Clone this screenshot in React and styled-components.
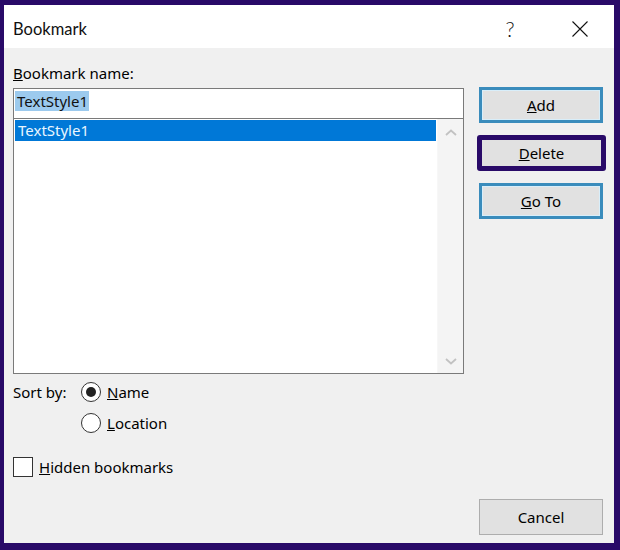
import React from "react";
import styled, { createGlobalStyle } from "styled-components";

const Global = createGlobalStyle`
  html, body { margin: 0; padding: 0; background: #290a68; }
  body { font-family: "Noto Sans", "Segoe UI", sans-serif; color: #000; }
  * { box-sizing: border-box; }
`;

const Frame = styled.div`
  width: 620px;
  height: 550px;
  border-style: solid;
  border-color: #290a68;
  border-width: 5px 6px 7px 4px;
  display: flex;
  flex-direction: column;
  background: #f0f0f0;
`;

const TitleBar = styled.div`
  height: 43px;
  background: #fff;
  display: flex;
  align-items: center;
  padding: 0 11px 0 9px;
`;

const Title = styled.div`
  font-family: Lato, "Noto Sans", sans-serif;
  font-size: 16.5px;
  flex: 1;
  padding-top: 4px;
  color: #111;
`;

const TitleBtn = styled.div`
  width: 46px;
  height: 43px;
  display: flex;
  align-items: center;
  justify-content: center;
  font-family: Lato, "Noto Sans", sans-serif;
  font-size: 21px;
  font-weight: 300;
  padding-top: 4px;
  color: #111;
  & + & { margin-left: 24px; }
`;

const Body = styled.div`
  flex: 1;
  display: flex;
  padding: 15px 11px 8px 9px;
  gap: 15px;
`;

const LeftCol = styled.div`
  width: 451px;
  display: flex;
  flex-direction: column;
`;

const RightCol = styled.div`
  width: 124px;
  display: flex;
  flex-direction: column;
  padding-top: 24px;
  gap: 12px;
`;

const Label = styled.div`
  font-size: 15px;
  line-height: 20px;
  margin-bottom: 5px;
`;

const Input = styled.div`
  height: 30px;
  background: #fff;
  border: 1px solid #7a7a7a;
  border-bottom: none;
  padding: 2px 1px;
  display: flex;
  align-items: flex-start;
`;

const Highlight = styled.span`
  background: #9ccaee;
  font-size: 15px;
  line-height: 20px;
  padding: 0 1px 0 2px;
  color: #111;
`;

const List = styled.div`
  height: 256px;
  background: #fff;
  border: 1px solid #7a7a7a;
  display: flex;
`;

const Items = styled.div`
  flex: 1;
  padding: 1px;
`;

const Row = styled.div`
  height: 21px;
  font-size: 15px;
  line-height: 21px;
  padding-left: 3px;
  background: ${(p) => (p.$selected ? "#0078d7" : "transparent")};
  color: ${(p) => (p.$selected ? "#e8f6ff" : "#000")};
`;

const Scroll = styled.div`
  width: 26px;
  background: #f4f4f4;
  border-left: 1px solid #f7f7f7;
  display: flex;
  flex-direction: column;
  justify-content: space-between;
  align-items: center;
  padding: 10px 0 8px;
`;

const SortRow = styled.div`
  display: flex;
  margin-top: 8px;
`;

const SortLabel = styled.div`
  width: 68px;
  font-size: 15px;
  line-height: 20px;
`;

const RadioGroup = styled.div`
  display: flex;
  flex-direction: column;
  gap: 11px;
`;

const Option = styled.label`
  display: flex;
  align-items: center;
  height: 20px;
  font-size: 15px;
  gap: 6px;
`;

const Radio = styled.span`
  width: 20px;
  height: 20px;
  border-radius: 50%;
  border: 1px solid #333;
  background: #fff;
  display: flex;
  align-items: center;
  justify-content: center;
  &::after {
    content: "";
    width: 10px;
    height: 10px;
    border-radius: 50%;
    background: ${(p) => (p.$checked ? "#222" : "transparent")};
  }
`;

const CheckRow = styled.label`
  display: flex;
  align-items: center;
  gap: 6px;
  margin-top: 24px;
  font-size: 15px;
  height: 20px;
`;

const Box = styled.span`
  width: 20px;
  height: 20px;
  border: 1px solid #333;
  background: #fff;
`;

const Button = styled.div`
  height: 36px;
  display: flex;
  align-items: center;
  justify-content: center;
  font-size: 15px;
  background: #e1e1e1;
  border: ${(p) => (p.$focus ? "5px solid #290a68" : p.$default ? "3px solid #3a8cbc" : "1px solid #adadad")};
  box-shadow: ${(p) => (p.$default ? "inset 0 0 0 1px #d8eefa" : "none")};
  border-radius: ${(p) => (p.$focus ? "3px" : "0")};
  margin: ${(p) => (p.$focus ? "0 -3px 0 -2px" : "0")};
`;

const Spacer = styled.div`
  flex: 1;
`;

const Chevron = ({ up }) => (
  <svg width="12" height="7" viewBox="0 0 12 7">
    <path
      d={up ? "M1 6 L6 1.5 L11 6" : "M1 1 L6 5.5 L11 1"}
      fill="none"
      stroke="#c2c2c2"
      strokeWidth="1.8"
    />
  </svg>
);

export default function App() {
  return (
    <>
      <Global />
      <Frame>
        <TitleBar>
          <Title>Bookmark</Title>
          <TitleBtn>?</TitleBtn>
          <TitleBtn>
            <svg width="16" height="16" viewBox="0 0 16 16">
              <path d="M0.5 0.5 L15.5 15.5 M15.5 0.5 L0.5 15.5" stroke="#111" strokeWidth="1.1" />
            </svg>
          </TitleBtn>
        </TitleBar>
        <Body>
          <LeftCol>
            <Label>
              <u>B</u>ookmark name:
            </Label>
            <Input>
              <Highlight>TextStyle1</Highlight>
            </Input>
            <List>
              <Items>
                <Row $selected>TextStyle1</Row>
              </Items>
              <Scroll>
                <Chevron up />
                <Chevron />
              </Scroll>
            </List>
            <SortRow>
              <SortLabel>Sort by:</SortLabel>
              <RadioGroup>
                <Option>
                  <Radio $checked />
                  <span>
                    <u>N</u>ame
                  </span>
                </Option>
                <Option>
                  <Radio />
                  <span>
                    <u>L</u>ocation
                  </span>
                </Option>
              </RadioGroup>
            </SortRow>
            <CheckRow>
              <Box />
              <span>
                <u>H</u>idden bookmarks
              </span>
            </CheckRow>
          </LeftCol>
          <RightCol>
            <Button $default>
              <span>
                <u>A</u>dd
              </span>
            </Button>
            <Button $focus>
              <span>
                <u>D</u>elete
              </span>
            </Button>
            <Button $default>
              <span>
                <u>G</u>o To
              </span>
            </Button>
            <Spacer />
            <Button>Cancel</Button>
          </RightCol>
        </Body>
      </Frame>
    </>
  );
}
